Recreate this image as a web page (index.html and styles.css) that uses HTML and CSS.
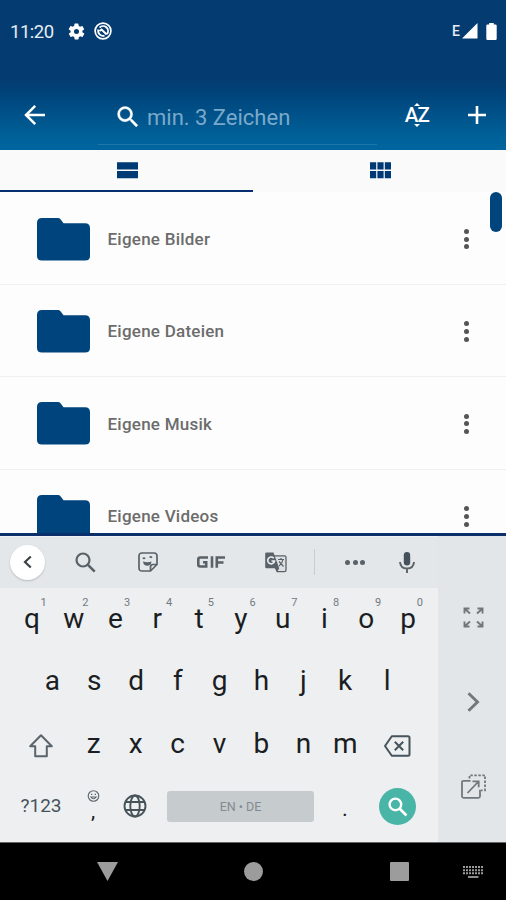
FILE: index.html
```html
<!DOCTYPE html>
<html lang="de">
<head>
<meta charset="utf-8">
<title>Dateien</title>
<link rel="stylesheet" href="styles.css">
</head>
<body>
<div class="screen">
  <header class="top">
    <div class="status">
      <span class="clock">11:20</span>
      <svg class="gear" width="19" height="19" viewBox="0 0 24 24"><path fill="#fff" fill-rule="evenodd" d="M19.4 13a7.500 7.500 0 0 0 0-2l2.100-1.600c.2-.15.2-.4.100-.6l-2-3.500c-.1-.2-.4-.3-.6-.2l-2.500 1a7.300 7.300 0 0 0-1.700-1l-.4-2.600a.5.5 0 0 0-.5-.5h-4a.5.5 0 0 0-.5.4l-.4 2.700c-.6.25-1.200.6-1.700 1l-2.500-1c-.2-.1-.5 0-.6.200l-2 3.500c-.1.200-.1.450.1.600L4.600 11a7.500 7.500 0 0 0 0 2l-2.100 1.600c-.2.150-.2.400-.1.600l2 3.500c.1.200.4.300.6.200l2.500-1c.5.400 1.100.75 1.700 1l.4 2.600c0 .3.200.5.500.5h4c.2 0 .5-.2.500-.5l.4-2.600c.6-.25 1.200-.6 1.700-1l2.500 1c.2.1.5 0 .6-.2l2-3.500c.1-.2.1-.45-.1-.6zM12 15.200a3.200 3.200 0 1 1 0-6.400 3.200 3.200 0 0 1 0 6.400z"/></svg>
      <svg class="nosync" width="18" height="18" viewBox="0 0 18 18" fill="none" stroke="#fff"><circle cx="9" cy="9" r="7.900" stroke-width="1.700"/><path stroke-width="1.900" d="M5.600 5.600A4.900 4.900 0 0 1 13 12M4.400 7.500A4.900 4.900 0 0 0 10.500 13.600M5.600 9l2-1.500 5 5"/></svg>
      <span class="net">E</span>
      <svg width="16" height="16" viewBox="0 0 16 16"><path fill="#fff" d="M15.500 0v15.500H0z"/></svg>
      <svg class="battery" width="11" height="17" viewBox="0 0 11 17"><path fill="#fff" d="M3.200 0h4.600v1.500h1.700q1.200 0 1.200 1.200v13q0 1.300-1.200 1.300h-8Q.3 17 .3 15.700v-13q0-1.200 1.200-1.200h1.700z"/></svg>
    </div>
    <div class="bar">
      <svg class="back" width="22" height="22" viewBox="0 0 22 22" fill="none" stroke="#fff" stroke-width="2.500"><path d="M21 11H2.500M11.200 1.800L2 11l9.200 9.200"/></svg>
      <label class="search">
        <svg width="28" height="28" viewBox="0 0 24 24"><path fill="#fff" stroke="#fff" stroke-width=".3" d="M15.500 14h-.79l-.28-.27A6.471 6.471 0 0 0 16 9.500 6.500 6.500 0 1 0 9.500 16c1.610 0 3.090-.59 4.230-1.570l.27.28v.79l5 4.990L20.490 19l-4.990-5zm-6 0C7.010 14 5 11.990 5 9.500S7.010 5 9.500 5 14 7.010 14 9.500 11.990 14 9.500 14z"/></svg>
        <span>min. 3 Zeichen</span>
      </label>
      <div class="sort"><i class="up"></i><span>AZ</span><i class="down"></i></div>
      <svg class="plus" width="18" height="18" viewBox="0 0 18 18" stroke="#fff" stroke-width="2.600"><path d="M9 0v18M0 9h18"/></svg>
    </div>
  </header>
  <nav class="tabs">
    <div class="tab active"><svg width="21" height="17" viewBox="0 0 21 17" fill="#003a74"><path d="M0 .2h21v7.200H0zM0 9h21v7.200H0z"/></svg></div>
    <div class="tab"><svg width="21" height="17" viewBox="0 0 21 17" fill="#003a74"><path d="M0 .2h6.200v7.200H0zM7.400.2h6.200v7.200H7.400zM14.800.2H21v7.200h-6.200zM0 9h6.200v7.200H0zM7.400 9h6.200v7.200H7.400zM14.800 9H21v7.200h-6.200z"/></svg></div>
  </nav>
  <main class="files">
    <div class="file"><svg class="folder" width="53" height="43" viewBox="0 0 53 43"><use href="#folder"/></svg><span>Eigene Bilder</span><div class="more"><i></i><i></i><i></i></div></div>
    <div class="file"><svg class="folder" width="53" height="43" viewBox="0 0 53 43"><use href="#folder"/></svg><span>Eigene Dateien</span><div class="more"><i></i><i></i><i></i></div></div>
    <div class="file"><svg class="folder" width="53" height="43" viewBox="0 0 53 43"><use href="#folder"/></svg><span>Eigene Musik</span><div class="more"><i></i><i></i><i></i></div></div>
    <div class="file"><svg class="folder" width="53" height="43" viewBox="0 0 53 43"><path id="folder" fill="#00447e" d="M5 0h16q1.500 0 2.500 1.200L26.500 5.200H48q5 0 5 5V38q0 4.500-5 4.500H5Q0 42.500 0 38V4.800Q0 0 5 0z"/></svg><span>Eigene Videos</span><div class="more"><i></i><i></i><i></i></div></div>
    <div class="thumb"></div>
  </main>
  <section class="keyboard">
    <div class="keys">
      <div class="tools">
        <div class="collapse"><svg width="9" height="14" viewBox="0 0 9 14" fill="none" stroke="#3c4347" stroke-width="2.200"><path d="M7.800 1.500L2 7l5.800 5.500"/></svg></div>
        <svg class="t-search" width="21" height="21" viewBox="0 0 21 21" fill="none" stroke="#596268"><circle cx="8" cy="8" r="6.500" stroke-width="2.200"/><path stroke-width="2.600" d="M12.700 12.700l7 7"/></svg>
        <svg class="t-sticker" width="20" height="20" viewBox="0 0 20 20" fill="none" stroke="#596268" stroke-width="1.700"><path d="M4 1h12q3 0 3 3v8.500L12.500 19H4q-3 0-3-3V4q0-3 3-3zM18.500 12.500h-3.500q-2.500 0-2.500 2.500v3.500"/><path fill="#596268" stroke="none" d="M5 9.500q4.500 1.500 8.500 0-.5 4.300-4.200 4.300T5 9.500z"/><path d="M4.800 6.600q1.200-1 2.400 0M11.500 5.200q1.500-.6 2.400.5" /></svg>
        <svg class="t-gif" width="28" height="12" viewBox="0 0 28 12" fill="none" stroke="#596268" stroke-width="2.600"><path d="M11 1.500H3.200Q1.300 1.500 1.300 3.400v5.200q0 1.900 1.900 1.900h6V6.200H6M15 .2v11.600M19.800 11.800V1.500H28M19.800 6.500h6.700"/></svg>
        <svg class="t-translate" width="22" height="21" viewBox="0 0 22 21"><path fill="#dde1e3" stroke="#596268" stroke-width="1.300" d="M9 3.800h10.500q1.500 0 1.500 1.500V18q0 1.700-1.500 1.700h-7.300L10 15"/><path fill="#596268" d="M1.500.5h7l5.700 15.700H1.500Q.2 16.200.2 15V1.800Q.2.500 1.500.5zM10.500 16.200h3.700l-2 4z"/><path fill="none" stroke="#eef0f1" stroke-width="1.600" d="M8.700 6.200A3.400 3.400 0 1 0 9.500 9H6.500"/><path fill="none" stroke="#596268" stroke-width="1.200" d="M13 7.500h6M16 6v1.500M18 7.500q-.7 4-4 6.500M14 9.500l4.500 5"/></svg>
        <span class="sep"></span>
        <div class="dots"><i></i><i></i><i></i></div>
        <svg class="t-mic" width="16" height="21" viewBox="0 0 16 21"><rect x="4.800" y="0" width="6.400" height="13.500" rx="3.200" fill="#46525b"/><path fill="none" stroke="#596268" stroke-width="1.900" d="M1 10q.5 6.500 7 6.500T15 10M8 16.500V21"/></svg>
      </div>
      <div class="row r1">
        <div>q<sup>1</sup></div><div>w<sup>2</sup></div><div>e<sup>3</sup></div><div>r<sup>4</sup></div><div>t<sup>5</sup></div><div>y<sup>6</sup></div><div>u<sup>7</sup></div><div>i<sup>8</sup></div><div>o<sup>9</sup></div><div>p<sup>0</sup></div>
      </div>
      <div class="row r2"><div>a</div><div>s</div><div>d</div><div>f</div><div>g</div><div>h</div><div>j</div><div>k</div><div>l</div></div>
      <div class="row r3">
        <div class="wide"><svg width="24" height="24" viewBox="0 0 24 24" fill="none" stroke="#59646b" stroke-width="2" stroke-linejoin="round"><path d="M12 1.200L22.800 12.200h-5v10H6.200v-10h-5z"/></svg></div>
        <div>z</div><div>x</div><div>c</div><div>v</div><div>b</div><div>n</div><div>m</div>
        <div class="wide"><svg width="27" height="22" viewBox="0 0 27 22" fill="none" stroke="#47535b" stroke-width="2" stroke-linejoin="round"><path d="M7.800 1.200H24q1.500 0 1.500 1.500v16.600q0 1.500-1.500 1.500H7.800L1 11zM10.800 6.800l8.400 8.400M19.200 6.800l-8.400 8.400"/></svg></div>
      </div>
      <div class="row r4">
        <div class="sym">?123</div>
        <div class="comma">
          <svg width="13" height="12" viewBox="0 0 13 12" fill="none" stroke="#59646b" stroke-width="1.100"><circle cx="6.500" cy="6" r="5.300"/><path d="M3.800 7q2.700 3.500 5.400 0zM4 4.400h1.300M7.700 4.400H9"/></svg>
          <span>,</span>
        </div>
        <div class="globe"><svg width="24" height="24" viewBox="0 0 24 24" fill="none" stroke="#47535b" stroke-width="1.900"><circle cx="12" cy="12" r="10.500"/><ellipse cx="12" cy="12" rx="4.700" ry="10.500"/><path d="M2.500 8h19M2.500 16h19"/></svg></div>
        <div class="space">EN • DE</div>
        <div class="period">.</div>
        <div class="go"><svg width="20" height="20" viewBox="0 0 20 20" fill="none" stroke="#fff"><circle cx="7.400" cy="7.400" r="5.800" stroke-width="2.400"/><path stroke-width="2.700" d="M11.500 11.500l7 7"/></svg></div>
      </div>
    </div>
    <aside class="side">
      <svg width="21" height="21" viewBox="0 0 21 21" fill="none" stroke="#70787d" stroke-width="1.900"><path d="M1.500 6.500v-5h5M1.500 1.500l5.500 5M14.500 1.500h5v5M19.500 1.500l-5.500 5M1.500 14.500v5h5M1.500 19.500l5.500-5M14.500 19.500h5v-5M19.500 19.500l-5.500-5"/></svg>
      <svg class="next" width="13" height="20" viewBox="0 0 13 20" fill="none" stroke="#70787d" stroke-width="2.900"><path d="M1.500 1.200L10.500 10l-9 8.800"/></svg>
      <svg width="25" height="25" viewBox="0 0 25 25" fill="none" stroke="#70787d" stroke-width="1.800"><path d="M9.500 6.800H2.500q-1.500 0-1.500 1.500v14q0 1.500 1.500 1.500h15q1.500 0 1.500-1.500v-6.500M6.500 19L17.500 7.500M11.500 7.300h6.200v6"/><path stroke-dasharray="2.500 1.500" d="M8.500 4.500V1.300H24v15h-4"/></svg>
    </aside>
  </section>
  <footer class="nav">
    <svg class="n-back" width="21" height="19" viewBox="0 0 21 19"><path fill="#9c9c9c" d="M0 0h21L10.500 19z"/></svg>
    <i class="home"></i>
    <i class="recent"></i>
    <svg class="n-kbd" width="20" height="12" viewBox="0 0 20 12" stroke="#9c9c9c"><path stroke-width="2" stroke-dasharray="2 1" d="M0 1h20M0 4.200h20M0 7.200h20"/><path stroke-width="1.800" d="M5 11h10.500"/></svg>
  </footer>
</div>
</body>
</html>
```
FILE: styles.css
```css
* { box-sizing: border-box; }
body { margin: 0; font-family: Roboto, "Liberation Sans", sans-serif; }
svg { display: block; flex: none; overflow: visible; }
.screen { width: 506px; height: 900px; overflow: hidden; display: flex; flex-direction: column; }

.top { height: 149.500px; flex: none; background: linear-gradient(#043c71 0 80px, #00437a 93px, #006199 137px, #00659f 149px); color: #fff; }
.status { height: 62px; padding: 0 9px 0 10px; display: flex; align-items: center; }
.clock { font-size: 18.500px; letter-spacing: -.5px; width: 57px; padding-top: 1px; color: #e6edf4; }
.nosync { margin-left: 8px; }
.net { margin-left: auto; margin-right: 2px; font-size: 14px; font-weight: 500; color: #e6edf4; }
.battery { margin-left: 8px; }
.bar { height: 87px; display: flex; align-items: center; padding: 0 20px 0 24px; }
.back { position: relative; top: 9.500px; }
.search { display: flex; align-items: center; width: 279px; height: 62px; margin-left: 52px; margin-top: 16px; padding: 8px 0 0 15px; border-bottom: 1px solid #1f76a8; font-size: 22px; color: #7aa9cb; gap: 5px; }
.search svg { margin-left: 1px; }
.search span { white-space: nowrap; }
.sort { width: 28px; margin-left: 26px; margin-top: 18px; display: flex; flex-direction: column; align-items: center; font-size: 20.500px; font-weight: 500; line-height: 18px; letter-spacing: -.8px; }
.sort i { border: 3px solid transparent; border-top: 0; border-bottom: 3px solid #fff; }
.sort .down { transform: rotate(180deg); }
.plus { margin-left: auto; position: relative; top: 9.500px; }

.tabs { height: 42.500px; flex: none; display: flex; background: #fafafa; }
.tab { width: 50%; display: flex; justify-content: center; padding: 12.500px 0 0 1.500px; border-bottom: 2px solid transparent; }
.tab.active { border-color: #052f70; }

.files { position: relative; height: 341px; flex: none; overflow: hidden; background: #fdfdfd; padding-top: .4px; }
.file { height: 92.400px; display: flex; align-items: center; padding: 2px 37px 0 37px; border-bottom: 1px solid #f0f0f0; font-size: 17px; font-weight: 500; letter-spacing: .24px; color: #6c6c6c; }
.file span { margin-left: 17.500px; }
.more { margin-left: auto; display: flex; flex-direction: column; gap: 2.800px; }
.more i { width: 5px; height: 5px; border-radius: 50%; background: #555; }
.thumb { position: absolute; right: 4px; top: 0; width: 12px; height: 40px; border-radius: 6px; background: #00447e; }

.keyboard { height: 309px; flex: none; display: flex; border-top: 3px solid #0a2f6b; background: #edeff1; color: #1a1e22; }
.keys { width: 438px; }
.tools { height: 52px; background: #e4e7e9; display: flex; align-items: center; padding: 0 0 1px 10px; border-top: 1px solid #eff1f2; }
.collapse { width: 35px; height: 35px; border-radius: 50%; background: #fff; box-shadow: 0 1px 2px #0003; display: flex; align-items: center; justify-content: center; }
.t-search { margin-left: 30px; }
.t-sticker { margin-left: 42px; }
.t-gif { margin-left: 39px; }
.t-translate { margin-left: 40px; }
.sep { width: 1px; height: 26px; margin-left: 27px; background: #c8cccf; }
.dots { display: flex; gap: 2.500px; margin-left: 30px; }
.dots i { width: 5px; height: 5px; border-radius: 50%; background: #596268; }
.t-mic { margin-left: 34px; }

.row { height: 62.600px; display: flex; font-size: 28px; line-height: 28px; }
.row > div { flex: 1; display: flex; justify-content: center; align-items: center; position: relative; padding-bottom: 1px; }
.row sup { position: absolute; left: 29.500px; top: 9px; font-size: 11px; line-height: 12px; color: #737a7f; }
.r1 { padding: 0 9px 0 11px; }
.r2 { padding: 0 30px 0 31.500px; }
.r3 { padding: 0 9px 0 10px; }
.r3 .wide { flex: 0 0 62.700px; padding: 3px 0 0; }
.row.r4 { height: 62px; padding-left: 10px; align-items: center; }
.row.r4 > div { flex: none; }
.row .sym { width: 62px; font-size: 19px; color: #47535b; }
.row .comma { width: 42px; height: 40px; flex-direction: column; justify-content: flex-start; gap: 3px; padding-top: 3px; }
.comma span { font-size: 21px; line-height: 12px; }
.row .globe { width: 42px; }
.row .space { width: 147px; height: 31px; margin-left: 11px; padding: 0; border-radius: 3px; background: #c6cbce; font-size: 12.500px; color: #838b90; }
.row .period { width: 42px; margin-left: 10px; padding: 4px 0 0; font-size: 22px; }
.row .go { width: 37px; height: 37px; margin-left: 13px; padding: 0; border-radius: 50%; background: #49b5a7; }
.side { width: 68px; background: #e3e6e8; display: flex; flex-direction: column; align-items: center; padding: 71px 0 0 3px; gap: 64px; }
.side svg:last-child { margin-top: -2px; }

.nav { height: 58px; flex: none; background: #000; border-top: 1px solid #666; display: flex; align-items: center; padding-left: 97px; }
.nav i { display: block; background: #9c9c9c; }
.home { width: 19px; height: 19px; border-radius: 50%; margin-left: 126px; }
.recent { width: 19px; height: 19px; margin-left: 127px; border-radius: 1px; }
.n-kbd { margin-left: 54px; }
```
